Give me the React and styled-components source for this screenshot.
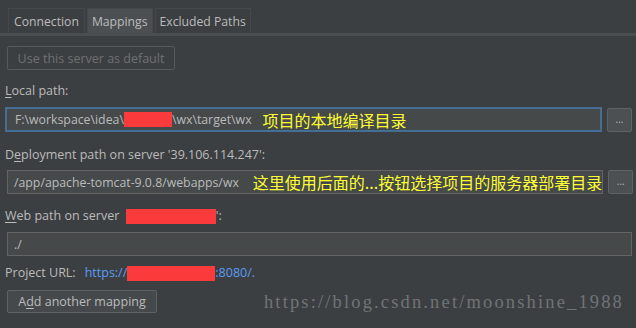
import React from "react";
import styled, { createGlobalStyle } from "styled-components";

const Global = createGlobalStyle`
  html, body { margin: 0; padding: 0; background: #3c3f41; }
  body { font-family: "Open Sans", "Noto Sans CJK SC", sans-serif; font-size: 12px; color: #bbbbbb; }
  * { box-sizing: border-box; }
`;

const Page = styled.div`
  width: 636px;
  height: 328px;
  background: #3c3f41;
  position: relative;
  overflow: hidden;
`;

const TabBar = styled.div`
  display: flex;
  padding: 8px 0 0 8px;
  border-bottom: 3px solid #4a4e51;
  background: #3c3f41;
`;

const Tab = styled.div`
  height: 25px;
  display: flex;
  align-items: center;
  padding: 0 ${p => p.$pad || 6}px;
  margin-right: 2px;
  background: ${p => (p.$active ? "#4b4f52" : "#3c3f41")};
  border-top: 1px solid #45494b;
  border-left: 1px solid #45494b;
  border-right: 1px solid #45494b;
  color: #bbbbbb;
  font-size: 12.2px;
`;

const Content = styled.div`
  display: flex;
  flex-direction: column;
  padding: 10px 4px 0 5px;
`;

const Button = styled.div`
  align-self: flex-start;
  height: ${p => p.$h || 24}px;
  width: ${p => p.$w}px;
  margin-top: ${p => p.$mt || 0}px;
  margin-left: 2px;
  display: flex;
  align-items: center;
  justify-content: center;
  border: 1px solid ${p => (p.$disabled ? "#555a5c" : "#5e6264")};
  background: ${p => (p.$disabled ? "#3c3f41" : "#45494b")};
  color: ${p => (p.$disabled ? "#6e7173" : "#bbbbbb")};
  font-size: 12.5px;
  border-radius: 2px;
`;

const Label = styled.div`
  margin-top: ${p => p.$mt}px;
  height: 16px;
  line-height: 16px;
  font-size: 12.5px;
  color: #bbbbbb;
  display: flex;
  align-items: center;
  white-space: nowrap;
`;

const U = styled.span`
  text-decoration: underline;
  text-underline-offset: 2px;
`;

const Row = styled.div`
  margin-top: ${p => p.$mt}px;
  display: flex;
  align-items: center;
  gap: 5px;
`;

const Field = styled.div`
  flex: 1;
  height: ${p => (p.$focus ? 25 : 24)}px;
  margin-left: ${p => (p.$focus ? 0 : 2)}px;
  display: flex;
  align-items: center;
  padding-left: ${p => (p.$focus ? 8 : 6)}px;
  background: #45494a;
  border: ${p => (p.$focus ? "2px solid #466d94" : "1px solid #646464")};
  color: #bbbbbb;
  font-size: 12.3px;
  white-space: nowrap;
  overflow: visible;
`;

const Note = styled.span`
  color: #ffff33;
  font-family: "Noto Sans CJK SC", sans-serif;
  font-size: 16px;
  margin-left: ${p => p.$ml}px;
  position: relative;
  z-index: 1;
`;

const Redact = styled.span`
  display: inline-block;
  width: ${p => p.$w}px;
  height: ${p => p.$h || 15}px;
  background: #fb3b3b;
  vertical-align: middle;
`;

const Browse = styled.div`
  width: 25px;
  height: 24px;
  flex-shrink: 0;
  border: 1px solid #5e6264;
  background: #4c5052;
  color: #bbbbbb;
  font-size: 10px;
  display: flex;
  align-items: center;
  justify-content: center;
  padding-bottom: 2px;
  border-radius: 2px;
  position: relative;
  z-index: 2;
`;

const Link = styled.span`
  color: #589df6;
  margin-left: 9px;
  display: inline-flex;
  align-items: center;
`;

const Watermark = styled.div`
  position: absolute;
  right: 12px;
  bottom: 15px;
  font-family: "Liberation Serif", serif;
  font-size: 18.5px;
  color: #707476;
  letter-spacing: 2.15px;
`;

export default function App() {
  return (
    <Page>
      <Global />
      <TabBar>
        <Tab $pad={5}>Connection</Tab>
        <Tab $active $pad={4}>Mappings</Tab>
        <Tab $pad={4}>Excluded Paths</Tab>
      </TabBar>
      <Content>
        <Button $disabled $w={168}>Use this server as default</Button>
        <Label $mt={13}><U>L</U>ocal path:</Label>
        <Row $mt={8}>
          <Field $focus>
            F:\workspace\idea\<Redact $w={48} />\wx\target\wx
            <Note $ml={11}>项目的本地编译目录</Note>
          </Field>
          <Browse>...</Browse>
        </Row>
        <Label $mt={15}>D<U>e</U>ployment path on server '39.106.114.247':</Label>
        <Row $mt={7}>
          <Field>
            /app/apache-tomcat-9.0.8/webapps/wx
            <Note $ml={14}>这里使用后面的...按钮选择项目的服务器部署目录</Note>
          </Field>
          <Browse>...</Browse>
        </Row>
        <Label $mt={14}><U>W</U>eb path on server&nbsp;&nbsp;<Redact $w={90} />':</Label>
        <Row $mt={8}>
          <Field>./</Field>
        </Row>
        <Label $mt={9}>Project URL:<Link>https://<Redact $w={88} />:8080/.</Link></Label>
        <Button $w={150} $h={23} $mt={9}>A<U>d</U>d another mapping</Button>
      </Content>
      <Watermark>https://blog.csdn.net/moonshine_1988</Watermark>
    </Page>
  );
}
